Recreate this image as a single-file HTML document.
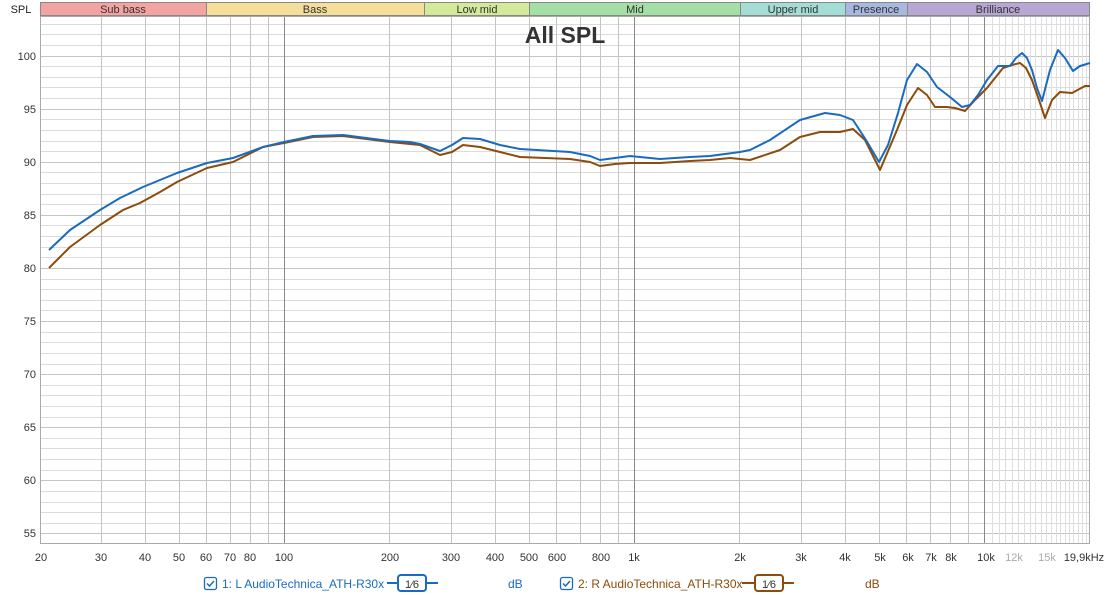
<!DOCTYPE html>
<html><head><meta charset="utf-8"><style>
html,body{margin:0;padding:0;background:#fff;width:1110px;height:595px;overflow:hidden;font-family:"Liberation Sans",sans-serif}
</style></head><body>
<svg width="1110" height="595" viewBox="0 0 1110 595" xmlns="http://www.w3.org/2000/svg" font-family="Liberation Sans, sans-serif">
<!-- band bar -->
<g stroke="#888" stroke-width="1">
<rect x="40.5" y="2.5" width="166" height="13" fill="#f4a3a3"/>
<rect x="206.5" y="2.5" width="218" height="13" fill="#f5de9a"/>
<rect x="424.5" y="2.5" width="105" height="13" fill="#d3ea9a"/>
<rect x="529.5" y="2.5" width="211" height="13" fill="#a4e0a6"/>
<rect x="740.5" y="2.5" width="105" height="13" fill="#a4dcd6"/>
<rect x="845.5" y="2.5" width="62" height="13" fill="#a8b8e0"/>
<rect x="907.5" y="2.5" width="182" height="13" fill="#b8a6d4"/>
</g>
<g font-size="11" fill="#333" text-anchor="middle">
<text x="123" y="13">Sub bass</text><text x="315" y="13">Bass</text><text x="477" y="13">Low mid</text>
<text x="635" y="13">Mid</text><text x="793" y="13">Upper mid</text><text x="876" y="13">Presence</text><text x="998" y="13">Brilliance</text>
</g>
<text x="21" y="13" font-size="11" fill="#222" text-anchor="middle">SPL</text>
<!-- horizontal grid -->
<path stroke="#dcdcdc" stroke-width="1" fill="none" d="M40 24.5H1090M40 34.5H1090M40 45.5H1090M40 66.5H1090M40 77.5H1090M40 87.5H1090M40 98.5H1090M40 119.5H1090M40 130.5H1090M40 141.5H1090M40 151.5H1090M40 172.5H1090M40 183.5H1090M40 194.5H1090M40 204.5H1090M40 225.5H1090M40 236.5H1090M40 247.5H1090M40 257.5H1090M40 279.5H1090M40 289.5H1090M40 300.5H1090M40 310.5H1090M40 332.5H1090M40 342.5H1090M40 353.5H1090M40 364.5H1090M40 385.5H1090M40 395.5H1090M40 406.5H1090M40 417.5H1090M40 438.5H1090M40 448.5H1090M40 459.5H1090M40 470.5H1090M40 491.5H1090M40 502.5H1090M40 512.5H1090M40 523.5H1090"/>
<path stroke="#c4c4c4" stroke-width="1" fill="none" d="M40 56.5H1090M40 109.5H1090M40 162.5H1090M40 215.5H1090M40 268.5H1090M40 321.5H1090M40 374.5H1090M40 427.5H1090M40 480.5H1090M40 533.5H1090"/>
<!-- vertical grid -->
<path stroke="#c4c4c4" stroke-width="1" fill="none" d="M101.5 17V544M145.5 17V544M179.5 17V544M206.5 17V544M230.5 17V544M250.5 17V544M268.5 17V544M389.5 17V544M451.5 17V544M495.5 17V544M529.5 17V544M556.5 17V544M580.5 17V544M600.5 17V544M618.5 17V544M739.5 17V544M801.5 17V544M845.5 17V544M879.5 17V544M906.5 17V544M930.5 17V544M950.5 17V544M968.5 17V544"/>
<path stroke="#dedede" stroke-width="1" fill="none" d="M992.5 17V544M999.5 17V544M1005.5 17V544M1012.5 17V544M1018.5 17V544M1024.5 17V544M1030.5 17V544M1035.5 17V544M1041.5 17V544M1046.5 17V544M1051.5 17V544M1056.5 17V544M1060.5 17V544M1065.5 17V544M1069.5 17V544M1073.5 17V544M1078.5 17V544M1082.5 17V544M1086.5 17V544"/>
<path stroke="#888" stroke-width="1" fill="none" d="M284.5 17V544M634.5 17V544M984.5 17V544"/>
<rect x="40.5" y="16.5" width="1049" height="527" fill="none" stroke="#aaa"/>
<!-- y labels -->
<g font-size="11" fill="#333" text-anchor="end">
<text x="36" y="60">100</text><text x="36" y="113">95</text><text x="36" y="166">90</text><text x="36" y="219">85</text><text x="36" y="272">80</text><text x="36" y="325">75</text><text x="36" y="378">70</text><text x="36" y="431">65</text><text x="36" y="484">60</text><text x="36" y="537">55</text>
</g>
<!-- x labels -->
<g font-size="11" fill="#333" text-anchor="middle">
<text x="41" y="561">20</text><text x="101" y="561">30</text><text x="145" y="561">40</text><text x="179" y="561">50</text><text x="206" y="561">60</text><text x="230" y="561">70</text><text x="250" y="561">80</text><text x="284" y="561">100</text><text x="390" y="561">200</text><text x="451" y="561">300</text><text x="495" y="561">400</text><text x="529" y="561">500</text><text x="557" y="561">600</text><text x="601" y="561">800</text><text x="634" y="561">1k</text><text x="740" y="561">2k</text><text x="801" y="561">3k</text><text x="845" y="561">4k</text><text x="880" y="561">5k</text><text x="908" y="561">6k</text><text x="931" y="561">7k</text><text x="951" y="561">8k</text><text x="986" y="561">10k</text>
<text x="1014" y="561" fill="#aaa">12k</text><text x="1047" y="561" fill="#aaa">15k</text><text x="1084" y="561">19,9kHz</text>
</g>
<text x="565" y="43" font-size="23" font-weight="bold" fill="#333" text-anchor="middle">All SPL</text>
<!-- curves -->
<polyline fill="none" stroke="#8b4c0c" stroke-width="2" stroke-linejoin="round" points="49,268 70,247 100,225 123,210 140,203 160,192 177,182 207,168 233,162 263,147 284,143 313,137 343,136 390,142 420,145 440,155 452,152 463,145 480,147 500,152 520,157 570,159 590,162 600,166 615,164 630,163 660,163 690,161 710,160 730,158 750,160 780,150 800,137 820,132 840,132 853,129 865,140 880,170 897,130 907,105 918,88 927,95 935,107 947,107 955,108 965,111 975,100 987,88 1003,68 1012,65 1020,63 1026,68 1032,80 1039,100 1045,118 1052,100 1060,92 1072,93 1085,86 1090,86"/>
<polyline fill="none" stroke="#1a6bbf" stroke-width="2" stroke-linejoin="round" points="49,250 70,230 100,210 120,198 143,187 160,180 177,173 207,163 233,158 263,147 284,142 313,136 343,135 390,141 410,142 420,144 440,151 452,145 463,138 480,139 500,145 520,149 570,152 590,156 600,160 615,158 630,156 660,159 690,157 710,156 740,152 750,150 770,140 800,120 825,113 840,115 853,120 866,140 879,162 888,145 898,113 907,80 917,64 927,72 937,87 950,97 962,107 970,105 978,95 987,80 998,66 1010,66 1016,58 1022,53 1027,58 1032,70 1037,88 1042,101 1050,70 1058,50 1065,58 1073,71 1080,66 1090,63"/>
<!-- legend -->
<rect x="204.5" y="577.5" width="12" height="12" rx="2" fill="#fff" stroke="#1a6bbf" stroke-width="1.3"/>
<path d="M207 583.5l2.5 2.5 4.5-5" fill="none" stroke="#1a6bbf" stroke-width="1.5"/>
<text x="222" y="588" font-size="12" fill="#1a6bbf">1: L AudioTechnica_ATH-R30x</text>
<line x1="387" y1="583" x2="438" y2="583" stroke="#1a6bbf" stroke-width="2"/>
<rect x="398" y="575" width="28" height="16" rx="3" fill="#fff" stroke="#1a6bbf" stroke-width="2"/>
<text x="412" y="588" font-size="11" fill="#333" text-anchor="middle">1⁄6</text>
<text x="508" y="588" font-size="12" fill="#1a6bbf">dB</text>
<rect x="560.5" y="577.5" width="12" height="12" rx="2" fill="#fff" stroke="#1a6bbf" stroke-width="1.3"/>
<path d="M563 583.5l2.5 2.5 4.5-5" fill="none" stroke="#1a6bbf" stroke-width="1.5"/>
<text x="578" y="588" font-size="12" fill="#8b4c0c">2: R AudioTechnica_ATH-R30x</text>
<line x1="742" y1="583" x2="794" y2="583" stroke="#8b4c0c" stroke-width="2"/>
<rect x="755" y="575" width="28" height="16" rx="3" fill="#fff" stroke="#8b4c0c" stroke-width="2"/>
<text x="769" y="588" font-size="11" fill="#333" text-anchor="middle">1⁄6</text>
<text x="865" y="588" font-size="12" fill="#8b4c0c">dB</text>
</svg>
</body></html>
